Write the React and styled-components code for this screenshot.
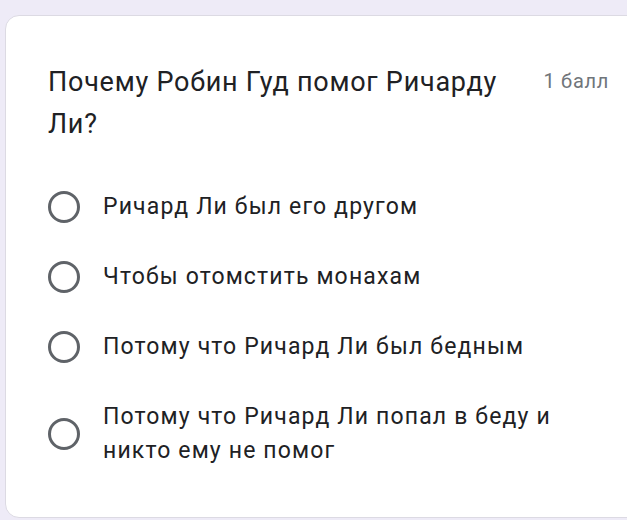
import React from 'react';
import styled, { createGlobalStyle } from 'styled-components';

const GlobalStyle = createGlobalStyle`
  html, body {
    margin: 0;
    padding: 0;
    background: #eeebf7;
    overflow: hidden;
  }
  body {
    font-family: Roboto, "Noto Sans", Arial, sans-serif;
  }
`;

const options = [
  'Ричард Ли был его другом',
  'Чтобы отомстить монахам',
  'Потому что Ричард Ли был бедным',
  'Потому что Ричард Ли попал в беду и никто ему не помог'
];

const App = () => (
  <Page>
    <GlobalStyle />
    <Card>
      <Header>
        <Title>Почему Робин Гуд помог Ричарду Ли?</Title>
        <Points>1 балл</Points>
      </Header>
      <OptionList>
        {options.map(text => (
          <Option key={text}>
            <Radio />
            <Label>{text}</Label>
          </Option>
        ))}
      </OptionList>
    </Card>
  </Page>
);

const Page = styled.div`
  width: 627px;
  height: 520px;
  overflow: hidden;
  padding: 15px 0 0 5px;
  box-sizing: border-box;
`;

const Card = styled.div`
  width: 660px;
  height: 503px;
  box-sizing: border-box;
  background: #fff;
  border: 1px solid #dcdae3;
  border-radius: 14px;
  padding: 45px 0 0 42px;
`;

const Header = styled.div`
  display: flex;
  align-items: flex-start;
  width: 561px;
`;

const Title = styled.h2`
  margin: 0;
  width: 470px;
  font-size: 27px;
  line-height: 42px;
  font-weight: 400;
  letter-spacing: 0.75px;
  color: #202124;
`;

const Points = styled.span`
  margin-left: auto;
  padding-top: 5px;
  font-size: 20px;
  line-height: 30px;
  letter-spacing: 0.7px;
  color: #70757a;
`;

const OptionList = styled.ul`
  list-style: none;
  margin: 45px 0 0;
  padding: 0;
  display: flex;
  flex-direction: column;
  gap: 36px;
`;

const Option = styled.li`
  display: flex;
  align-items: center;
  gap: 23px;
`;

const Radio = styled.span`
  flex: none;
  width: 26px;
  height: 26px;
  border: 3px solid #5f6368;
  border-radius: 50%;
`;

const Label = styled.span`
  width: 470px;
  font-size: 23px;
  line-height: 34px;
  letter-spacing: 1.15px;
  color: #202124;
`;

export default App;
